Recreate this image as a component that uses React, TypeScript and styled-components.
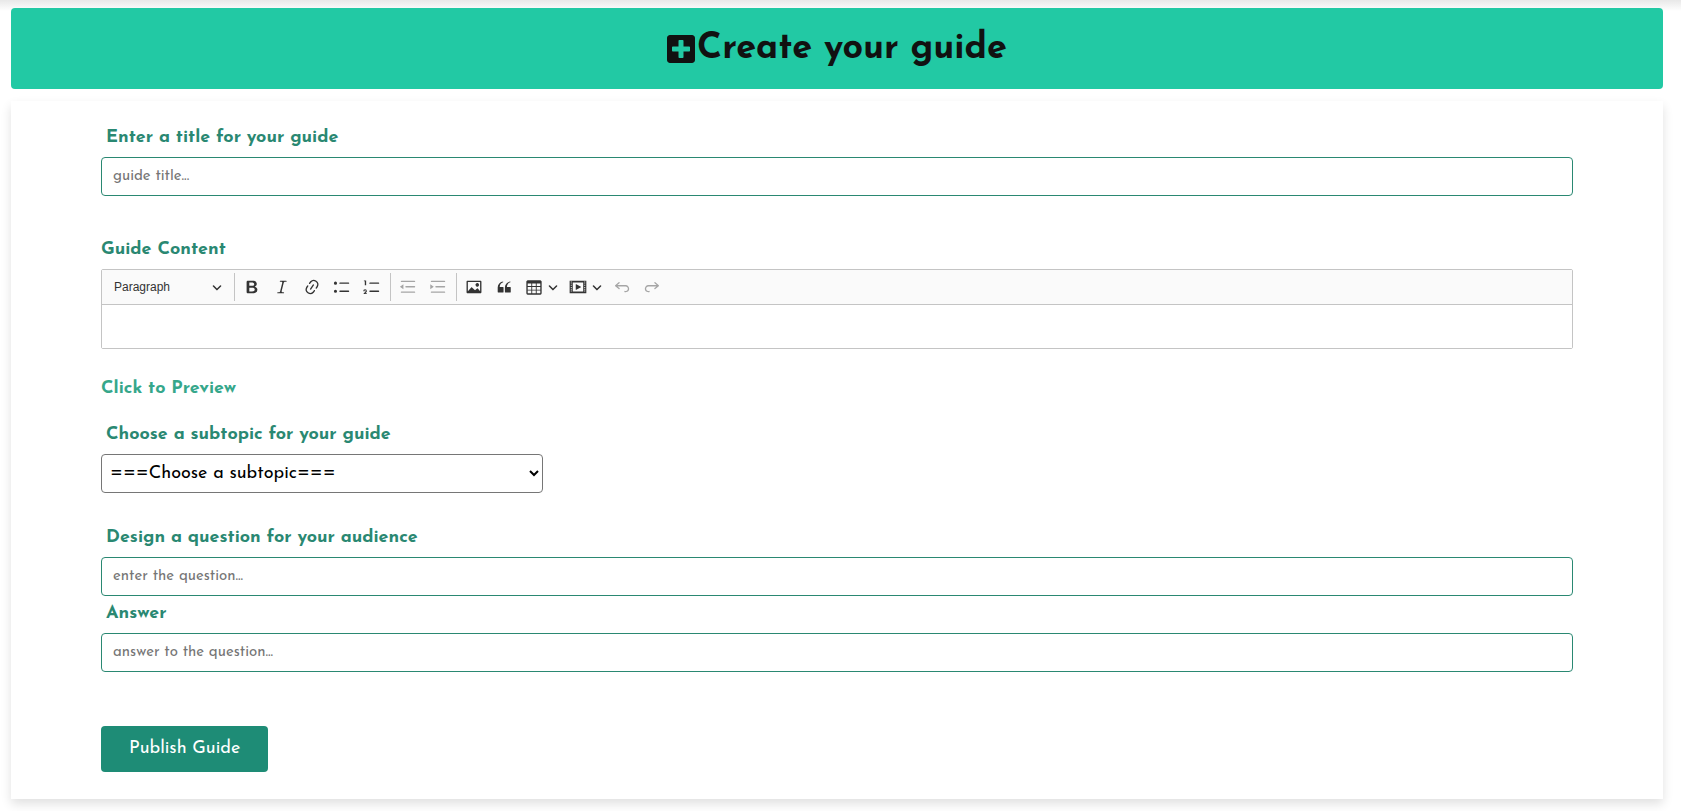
import React from 'react';
import styled, { createGlobalStyle } from 'styled-components';

const GlobalStyle = createGlobalStyle`
  *, *::before, *::after { box-sizing: border-box; }
  body {
    margin: 0;
    background: #fff linear-gradient(#e8e8e8, #fff) 0 0 / 100% 11px no-repeat;
    font-family: 'Josefin Sans', Lato, sans-serif;
    color: #111;
  }
  input, select, button { font-family: inherit; }
`;

const Page = styled.main`
  padding: 8px 18px 12px 11px;
`;

const Banner = styled.header`
  display: flex;
  align-items: center;
  justify-content: center;
  gap: 2px;
  height: 81px;
  border-radius: 4px;
  background: #22c9a4;
  color: #111;
`;

const BannerTitle = styled.h1`
  margin: 0;
  font-size: 36px;
  font-weight: 700;
  line-height: 48px;
`;

const BannerIcon = styled.svg`
  width: 28px;
  height: 32px;
  fill: currentColor;
`;

const Card = styled.form`
  margin-top: 12px;
  padding: 25px 90px 27px;
  background: #fff;
  box-shadow: 0 5px 10px rgba(0, 0, 0, 0.12);
`;

const Field = styled.div<{ $after?: number }>`
  display: flex;
  flex-direction: column;
  align-items: flex-start;
  gap: 7px;
  margin-bottom: ${(p) => p.$after ?? 0}px;
`;

const Label = styled.label<{ $flush?: boolean }>`
  padding-left: ${(p) => (p.$flush ? 0 : 5)}px;
  color: #2a8872;
  font-size: 18px;
  font-weight: 700;
  line-height: 24px;
`;

const TextInput = styled.input`
  width: 100%;
  height: 39px;
  padding: 0 11px;
  border: 1px solid #2a8872;
  border-radius: 4px;
  background: #fff;
  font-size: 15px;
  &::placeholder { color: #757575; opacity: 1; }
`;

const Select = styled.select`
  width: 30%;
  height: 39px;
  padding: 0 0 0 4px;
  border: 1px solid #767676;
  border-radius: 4px;
  background-color: #fff;
  color: #000;
  font-size: 18px;
`;

const PreviewLink = styled.a`
  display: block;
  width: fit-content;
  margin-bottom: 22px;
  color: #36a78b;
  font-size: 18px;
  font-weight: 700;
  line-height: 24px;
  text-decoration: none;
`;

const PublishButton = styled.button`
  height: 46px;
  padding: 0 28px;
  border: 0;
  border-radius: 4px;
  background: #1e8c76;
  color: #fff;
  font-size: 18px;
`;

const Editor = styled.div`
  width: 100%;
  border: 1px solid #c4c4c4;
  border-radius: 2px;
  font-family: 'Liberation Sans', Arial, sans-serif;
`;

const Toolbar = styled.div`
  display: flex;
  align-items: center;
  height: 35px;
  padding-left: 4px;
  border-bottom: 1px solid #c4c4c4;
  background: #fafafa;
`;

const ToolGroup = styled.div`
  display: flex;
  gap: 2px;
  padding: 0 4px 0 3px;
  & + & { border-left: 1px solid #c4c4c4; }
`;

const ToolButton = styled.button<{ $wide?: boolean }>`
  display: flex;
  align-items: center;
  justify-content: center;
  gap: 5px;
  width: ${(p) => (p.$wide ? 42 : 28)}px;
  height: 28px;
  padding: 0;
  border: 0;
  background: none;
  color: #333;
  &:disabled { color: #a5a5a5; }
`;

const HeadingButton = styled(ToolButton)`
  justify-content: space-between;
  width: 121px;
  padding: 0 8px 0 5px;
  font-family: inherit;
  font-size: 12px;
`;

const Glyph = styled.svg`
  flex: none;
  width: 18px;
  height: 18px;
  fill: currentColor;
`;

const Caret = styled.svg`
  flex: none;
  width: 10px;
  height: 10px;
  fill: currentColor;
`;

const EditArea = styled.div`
  height: 43px;
  padding: 10px;
  background: #fff;
  outline: none;
`;

const line = (x: number, y: number) =>
  `M${x} ${y}a.75.75 0 0 0 .75.75H${17.25}a.75.75 0 1 0 0-1.5H${x + 0.75}a.75.75 0 0 0-.75.75z`;

const icons = {
  bold: 'M10.187 17H5.773c-.637 0-1.092-.138-1.364-.415-.273-.277-.409-.718-.409-1.323V4.738c0-.617.14-1.062.419-1.332.279-.27.73-.406 1.354-.406h4.68c.69 0 1.288.041 1.793.124.506.083.96.242 1.36.478.341.197.644.447.906.75a3.262 3.262 0 0 1 .808 2.162c0 1.401-.722 2.426-2.167 3.075C15.05 10.175 16 11.315 16 13.01a3.756 3.756 0 0 1-2.296 3.504 6.1 6.1 0 0 1-1.517.377c-.571.073-1.238.11-2 .11zm-.217-6.217H7v4.087h3.069c1.977 0 2.965-.69 2.965-2.072 0-.707-.256-1.22-.768-1.537-.512-.319-1.277-.478-2.296-.478zM7 5.13v3.619h2.606c.729 0 1.292-.067 1.69-.2a1.6 1.6 0 0 0 .91-.765c.165-.267.247-.566.247-.897 0-.707-.26-1.176-.778-1.409-.519-.232-1.31-.348-2.375-.348H7z',
  italic: 'm9.586 14.633.021.004c-.036.335.095.655.393.962.082.083.173.15.274.201h1.474a.6.6 0 1 1 0 1.2H5.304a.6.6 0 0 1 0-1.2h1.15c.474-.07.809-.182 1.005-.334.157-.122.291-.32.404-.597l2.416-9.55a1.053 1.053 0 0 0-.281-.823 1.12 1.12 0 0 0-.442-.296H8.15a.6.6 0 0 1 0-1.2h6.443a.6.6 0 1 1 0 1.2h-1.195c-.376.056-.65.155-.823.296-.215.175-.423.439-.623.79l-2.366 9.347z',
  link: 'm11.077 15 .991-1.416a.75.75 0 1 1 1.229.86l-1.148 1.64a.748.748 0 0 1-.217.206 5.251 5.251 0 0 1-8.503-5.955.741.741 0 0 1 .12-.274l1.147-1.639a.75.75 0 1 1 1.228.86L4.933 10.7l.006.003a3.75 3.75 0 0 0 6.132 4.294l.006.004zm5.494-5.335a.748.748 0 0 1-.12.274l-1.147 1.639a.75.75 0 1 1-1.228-.86l.86-1.23a3.75 3.75 0 0 0-6.144-4.301l-.86 1.229a.75.75 0 0 1-1.229-.86l1.148-1.64a.748.748 0 0 1 .217-.206 5.251 5.251 0 0 1 8.503 5.955zm-4.563-2.532a.75.75 0 0 1 .184 1.045l-3.155 4.505a.75.75 0 1 1-1.229-.86l3.155-4.506a.75.75 0 0 1 1.045-.184z',
  bullets: `${line(7, 5.75)}${line(7, 14.75)}M1 5.75a1.75 1.75 0 1 0 3.5 0a1.75 1.75 0 1 0-3.5 0zM1 14.75a1.75 1.75 0 1 0 3.5 0a1.75 1.75 0 1 0-3.5 0z`,
  numbers: `${line(7, 5.75)}${line(7, 14.75)}M3.5 3v5H2V3.7H1v-1h2.5V3zM.343 17.857l2.59-3.257H2.92a.6.6 0 1 0-1.04 0H.302a2 2 0 1 1 3.995 0h-.001c-.048.405-.16.734-.333.988-.175.254-.59.692-1.244 1.312H4.3v1h-4l.043-.043z`,
  outdent: `${line(2, 3.75)}${line(7, 9.75)}${line(2, 15.75)}M4.9 7v5.5L1 9.75z`,
  indent: `${line(2, 3.75)}${line(7, 9.75)}${line(2, 15.75)}M1.4 7v5.5l3.9-2.75z`,
  image: 'M6.91 10.54c.26-.23.64-.21.88.03l3.36 3.14 2.23-2.06a.64.64 0 0 1 .87 0l2.52 2.97V4.5H3.2v10.12l3.71-4.08zm10.27-7.51c.6 0 1.09.47 1.09 1.05v11.84c0 .59-.49 1.06-1.09 1.06H2.79c-.6 0-1.09-.47-1.09-1.06V4.08c0-.58.49-1.05 1.1-1.05h14.38zm-5.22 5.56a1.96 1.96 0 1 1 3.4-1.96 1.96 1.96 0 0 1-3.4 1.96z',
  quote: 'M3 10.423a6.5 6.5 0 0 1 6.056-6.408l.038.67C6.448 5.423 5.354 7.663 5.22 10H9c.552 0 .5.432.5.986v4.511c0 .554-.448.503-1 .503h-5c-.552 0-.5-.449-.5-1.003v-4.574zm8 0a6.5 6.5 0 0 1 6.056-6.408l.038.67c-2.646.739-3.74 2.979-3.873 5.315H17c.552 0 .5.432.5.986v4.511c0 .554-.448.503-1 .503h-5c-.552 0-.5-.449-.5-1.003v-4.574z',
  table: 'M3 6v3h4V6H3zm0 4v3h4v-3H3zm0 4v3h4v-3H3zm5 3h4v-3H8v3zm5 0h4v-3h-4v3zm4-4v-3h-4v3h4zm0-4V6h-4v3h4zm1.5 8a1.5 1.5 0 0 1-1.5 1.5H3A1.5 1.5 0 0 1 1.5 17V4c.222-.863 1.068-1.5 2-1.5h13c.932 0 1.778.637 2 1.5v13zM12 13v-3H8v3h4zm0-4V6H8v3h4z',
  media: 'M18.68 3.03c.6 0 .59-.03.59.55v12.84c0 .59.01.56-.59.56H1.29c-.6 0-.59.03-.59-.56V3.58c0-.58-.01-.55.6-.55h17.38zM15.77 15V5H4.2v10h11.57zM2 4v1h1V4H2zm0 2v1h1V6H2zm0 2v1h1V8H2zm0 2v1h1v-1H2zm0 2v1h1v-1H2zm0 2v1h1v-1H2zM17 4v1h1V4h-1zm0 2v1h1V6h-1zm0 2v1h1V8h-1zm0 2v1h1v-1h-1zm0 2v1h1v-1h-1zm0 2v1h1v-1h-1zM7.5 7.177a.4.4 0 0 1 .593-.351l5.133 2.824a.4.4 0 0 1 0 .7l-5.133 2.824a.4.4 0 0 1-.593-.35V7.176v.001z',
  undo: 'm5.042 9.367 2.189 1.837a.75.75 0 0 1-.965 1.149l-3.788-3.18a.747.747 0 0 1-.21-.284.75.75 0 0 1 .17-.945L6.23 4.762a.75.75 0 1 1 .964 1.15L4.863 7.866h8.917A.75.75 0 0 1 14 7.9a4 4 0 1 1-1.477 7.718l.344-1.489a2.5 2.5 0 1 0 1.094-4.73l.008-.032H5.042z',
  redo: 'm14.958 9.367-2.189 1.837a.75.75 0 0 0 .965 1.149l3.788-3.18a.747.747 0 0 0 .21-.284.75.75 0 0 0-.17-.945L13.77 4.762a.75.75 0 1 0-.964 1.15l2.331 1.954H6.22A.75.75 0 0 0 6 7.9a4 4 0 1 0 1.477 7.718l-.344-1.489A2.5 2.5 0 1 1 6.039 9.4l-.008-.032h8.927z',
};

type Tool = { icon: keyof typeof icons; name: string; disabled?: boolean; menu?: boolean };

const toolGroups: Tool[][] = [
  [
    { icon: 'bold', name: 'Bold' },
    { icon: 'italic', name: 'Italic' },
    { icon: 'link', name: 'Link' },
    { icon: 'bullets', name: 'Bulleted List' },
    { icon: 'numbers', name: 'Numbered List' },
  ],
  [
    { icon: 'outdent', name: 'Decrease indent', disabled: true },
    { icon: 'indent', name: 'Increase indent', disabled: true },
  ],
  [
    { icon: 'image', name: 'Insert image' },
    { icon: 'quote', name: 'Block quote' },
    { icon: 'table', name: 'Insert table', menu: true },
    { icon: 'media', name: 'Insert media', menu: true },
    { icon: 'undo', name: 'Undo', disabled: true },
    { icon: 'redo', name: 'Redo', disabled: true },
  ],
];

const CaretIcon = () => (
  <Caret viewBox="0 0 10 10" aria-hidden="true">
    <path d="M.941 4.523a.75.75 0 1 1 1.06-1.06l3.006 3.005 3.005-3.005a.75.75 0 1 1 1.06 1.06l-3.549 3.55a.75.75 0 0 1-1.168-.136L.941 4.523z" />
  </Caret>
);

export default function App() {
  return (
    <>
      <GlobalStyle />
      <Page>
        <Banner>
          <BannerIcon viewBox="0 0 448 512" aria-hidden="true">
            <path d="M400 32H48C21.500 32 0 53.500 0 80v352c0 26.500 21.500 48 48 48h352c26.500 0 48-21.500 48-48V80c0-26.500-21.500-48-48-48zm-32 252c0 6.600-5.400 12-12 12h-92v92c0 6.600-5.400 12-12 12h-56c-6.600 0-12-5.400-12-12v-92H92c-6.600 0-12-5.400-12-12v-56c0-6.600 5.400-12 12-12h92v-92c0-6.600 5.400-12 12-12h56c6.600 0 12 5.400 12 12v92h92c6.600 0 12 5.400 12 12v56z" />
          </BannerIcon>
          <BannerTitle>Create your guide</BannerTitle>
        </Banner>
        <Card onSubmit={(e) => e.preventDefault()}>
          <Field $after={42}>
            <Label htmlFor="title">Enter a title for your guide</Label>
            <TextInput id="title" type="text" placeholder="guide title..." />
          </Field>
          <Field $after={28}>
            <Label as="div" id="content-label" $flush>Guide Content</Label>
            <Editor>
              <Toolbar role="toolbar" aria-label="Editor toolbar">
                <ToolGroup>
                  <HeadingButton type="button">
                    Paragraph
                    <CaretIcon />
                  </HeadingButton>
                </ToolGroup>
                {toolGroups.map((group, i) => (
                  <ToolGroup key={i}>
                    {group.map((tool) => (
                      <ToolButton
                        key={tool.icon}
                        type="button"
                        aria-label={tool.name}
                        disabled={tool.disabled}
                        $wide={tool.menu}
                      >
                        <Glyph viewBox="0 0 20 20" aria-hidden="true">
                          <path d={icons[tool.icon]} />
                        </Glyph>
                        {tool.menu && <CaretIcon />}
                      </ToolButton>
                    ))}
                  </ToolGroup>
                ))}
              </Toolbar>
              <EditArea contentEditable role="textbox" aria-labelledby="content-label" />
            </Editor>
          </Field>
          <PreviewLink href="#preview">Click to Preview</PreviewLink>
          <Field $after={33}>
            <Label htmlFor="subtopic">Choose a subtopic for your guide</Label>
            <Select id="subtopic">
              <option>===Choose a subtopic===</option>
            </Select>
          </Field>
          <Field $after={6}>
            <Label htmlFor="question">Design a question for your audience</Label>
            <TextInput id="question" type="text" placeholder="enter the question..." />
          </Field>
          <Field $after={54}>
            <Label htmlFor="answer">Answer</Label>
            <TextInput id="answer" type="text" placeholder="answer to the question..." />
          </Field>
          <PublishButton type="submit">Publish Guide</PublishButton>
        </Card>
      </Page>
    </>
  );
}
